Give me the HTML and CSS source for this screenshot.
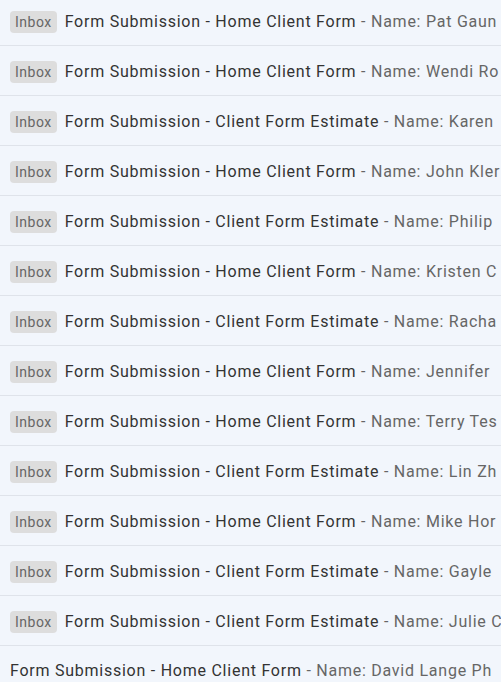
FILE: index.html
```html
<!DOCTYPE html>
<html lang="en">
<head>
  <meta charset="UTF-8" />
  <meta name="viewport" content="width=device-width, initial-scale=1.0"/>
  <title>Inbox</title>
  <link rel="stylesheet" href="styles.css">
</head>
<body>
  <div class="mail-list">
    <div class="mail-row"><span class="label">Inbox</span><span class="subject">Form Submission - Home Client Form</span><span class="snippet"> - Name: Pat Gaun</span></div>
    <div class="mail-row"><span class="label">Inbox</span><span class="subject">Form Submission - Home Client Form</span><span class="snippet"> - Name: Wendi Ro</span></div>
    <div class="mail-row"><span class="label">Inbox</span><span class="subject">Form Submission - Client Form Estimate</span><span class="snippet"> - Name: Karen</span></div>
    <div class="mail-row"><span class="label">Inbox</span><span class="subject">Form Submission - Home Client Form</span><span class="snippet"> - Name: John Kler</span></div>
    <div class="mail-row"><span class="label">Inbox</span><span class="subject">Form Submission - Client Form Estimate</span><span class="snippet"> - Name: Philip</span></div>
    <div class="mail-row"><span class="label">Inbox</span><span class="subject">Form Submission - Home Client Form</span><span class="snippet"> - Name: Kristen C</span></div>
    <div class="mail-row"><span class="label">Inbox</span><span class="subject">Form Submission - Client Form Estimate</span><span class="snippet"> - Name: Racha</span></div>
    <div class="mail-row"><span class="label">Inbox</span><span class="subject">Form Submission - Home Client Form</span><span class="snippet"> - Name: Jennifer</span></div>
    <div class="mail-row"><span class="label">Inbox</span><span class="subject">Form Submission - Home Client Form</span><span class="snippet"> - Name: Terry Tes</span></div>
    <div class="mail-row"><span class="label">Inbox</span><span class="subject">Form Submission - Client Form Estimate</span><span class="snippet"> - Name: Lin Zh</span></div>
    <div class="mail-row"><span class="label">Inbox</span><span class="subject">Form Submission - Home Client Form</span><span class="snippet"> - Name: Mike Hor</span></div>
    <div class="mail-row"><span class="label">Inbox</span><span class="subject">Form Submission - Client Form Estimate</span><span class="snippet"> - Name: Gayle</span></div>
    <div class="mail-row"><span class="label">Inbox</span><span class="subject">Form Submission - Client Form Estimate</span><span class="snippet"> - Name: Julie C</span></div>
    <div class="mail-row last"><span class="subject">Form Submission - Home Client Form</span><span class="snippet"> - Name: David Lange Ph</span></div>
  </div>
</body>
</html>
```

FILE: styles.css
```css
body {
  font-family: Roboto, "Noto Sans", Arial, sans-serif;
  margin: 0;
  padding: 0;
  background-color: #ffffff;
  overflow: hidden;
}
.mail-list {
  background-color: #f2f6fc;
  margin-top: -4px;
}
.mail-row {
  box-sizing: border-box;
  display: flex;
  align-items: center;
  height: 50px;
  padding-left: 10px;
  padding-top: 2px;
  border-bottom: 1px solid #dfe3ea;
  white-space: nowrap;
  overflow: hidden;
  font-size: 16px;
  letter-spacing: 0.75px;
}
.mail-row.last {
  height: 36px;
  padding-top: 15px;
  align-items: flex-start;
  border-bottom: none;
}
.label {
  background-color: #dddddd;
  color: #666666;
  font-size: 14px;
  letter-spacing: 0.5px;
  border-radius: 4px;
  padding: 0 5px;
  height: 22px;
  line-height: 22px;
  margin-right: 8px;
}
.subject {
  color: #333333;
}
.snippet {
  color: #666666;
  white-space: pre;
}
```
